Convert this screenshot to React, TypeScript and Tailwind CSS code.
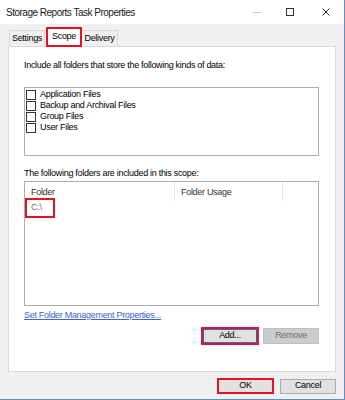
import React from "react";

const font = { fontFamily: "'Liberation Sans', Arial, sans-serif" };

function Checkbox({ label }: { label: string }) {
  return (
    <div className="flex items-center h-[11px]">
      <div className="w-[10px] h-[10px] border border-[#333333] bg-white shrink-0" />
      <span className="ml-[4px] text-[9px] leading-[11px] tracking-[-0.3px] text-black">{label}</span>
    </div>
  );
}

export default function App() {
  return (
    <div
      className="w-[345px] h-[400px] bg-[#f0f0f0] border-r border-b border-[#5b8fd4] flex flex-col overflow-hidden"
      style={font}
    >
      {/* Title bar */}
      <div className="h-[24px] bg-white flex items-center shrink-0">
        <span className="ml-[6px] text-[10px] tracking-[-0.5px] text-[#1a1a1a]">Storage Reports Task Properties</span>
        <div className="ml-auto flex items-center">
          <svg className="shrink-0" width="9" height="8" viewBox="0 0 9 8">
            <path d="M0 4.5 H9" stroke="#c8c8c8" strokeWidth="1" />
          </svg>
          <div className="ml-[25px] w-[8px] h-[8px] border border-[#333333] shrink-0" />
          <svg className="ml-[28px] mr-[14px] shrink-0" width="8" height="8" viewBox="0 0 8 8">
            <path d="M0.5 0.5 L7.5 7.5 M7.5 0.5 L0.5 7.5" stroke="#333" strokeWidth="1" />
          </svg>
        </div>
      </div>

      {/* Body */}
      <div className="flex-1 pl-[8px] pr-[8px] flex flex-col">
        {/* Tabs */}
        <div className="h-[22px] flex items-end pl-[1px] shrink-0">
          <div className="h-[16px] w-[36px] border border-b-0 border-[#d9d9d9] bg-[#f0f0f0] flex items-center justify-center text-[9px] tracking-[-0.3px] text-black">
            Settings
          </div>
          <div className="h-[20px] w-[36px] ml-[1px] border-2 border-[#e81123] bg-white flex items-center justify-center text-[9px] tracking-[-0.3px] text-black relative top-[1px]">
            Scope
          </div>
          <div className="h-[16px] w-[36px] border border-b-0 border-l-0 border-[#d9d9d9] bg-[#f0f0f0] flex items-center justify-center text-[9px] tracking-[-0.3px] text-black">
            Delivery
          </div>
        </div>

        {/* Panel */}
        <div className="h-[326px] w-[328px] border border-[#d9d9d9] bg-white flex flex-col pl-[15px] pr-[16px] shrink-0">
          <div className="mt-[12px] text-[9px] leading-[12px] tracking-[-0.3px] text-black">
            Include all folders that store the following kinds of data:
          </div>
          <div className="mt-[16px] h-[69px] border border-[#adadad] bg-white pt-[1px] pl-[1px] flex flex-col gap-0">
            <Checkbox label="Application Files" />
            <Checkbox label="Backup and Archival Files" />
            <Checkbox label="Group Files" />
            <Checkbox label="User Files" />
          </div>

          <div className="mt-[11px] text-[9px] leading-[12px] tracking-[-0.3px] text-black">
            The following folders are included in this scope:
          </div>
          <div className="mt-[2px] h-[125px] border border-[#adadad] bg-white flex flex-col">
            <div className="h-[19px] flex text-[9px] tracking-[-0.3px] text-[#333333]">
              <div className="w-[150px] border-r border-[#e5e5e5] flex items-center pl-[6px] pt-[3px]">Folder</div>
              <div className="w-[108px] border-r border-[#e5e5e5] flex items-center pl-[6px] pt-[3px]">Folder Usage</div>
              <div className="flex-1" />
            </div>
            <div className="mt-[-3px] w-[30px] h-[20px] border-2 border-[#e81123] flex items-center pl-[4px] text-[9px] tracking-[-0.3px] text-[#6d6d6d]">
              C:\
            </div>
          </div>

          <div className="mt-[3px] text-[9px] leading-[12px] tracking-[-0.3px] text-[#3b5fd9] underline">
            Set Folder Management Properties...
          </div>

          <div className="mt-[6px] flex justify-end items-center">
            <div className="border-2 border-[#e81123]">
              <div className="w-[54px] h-[14px] border border-[#0078d7] bg-[#e1e1e1] flex items-center justify-center text-[9px] tracking-[-0.3px] text-black">
                Add...
              </div>
            </div>
            <div className="ml-[4px] w-[56px] h-[16px] border border-[#bfbfbf] bg-[#cccccc] flex items-center justify-center text-[9px] tracking-[-0.3px] text-[#6d6d6d]">
              Remove
            </div>
          </div>
        </div>

        {/* Footer */}
        <div className="flex justify-end items-center pt-[6px]">
          <div className="border-2 border-[#e81123]">
            <div className="w-[53px] h-[12px] bg-[#e1e1e1] flex items-center justify-center text-[9px] tracking-[-0.3px] text-black">
              OK
            </div>
          </div>
          <div className="ml-[6px] w-[56px] h-[15px] border border-[#adadad] bg-[#e1e1e1] flex items-center justify-center text-[9px] tracking-[-0.3px] text-black">
            Cancel
          </div>
        </div>
      </div>
    </div>
  );
}
